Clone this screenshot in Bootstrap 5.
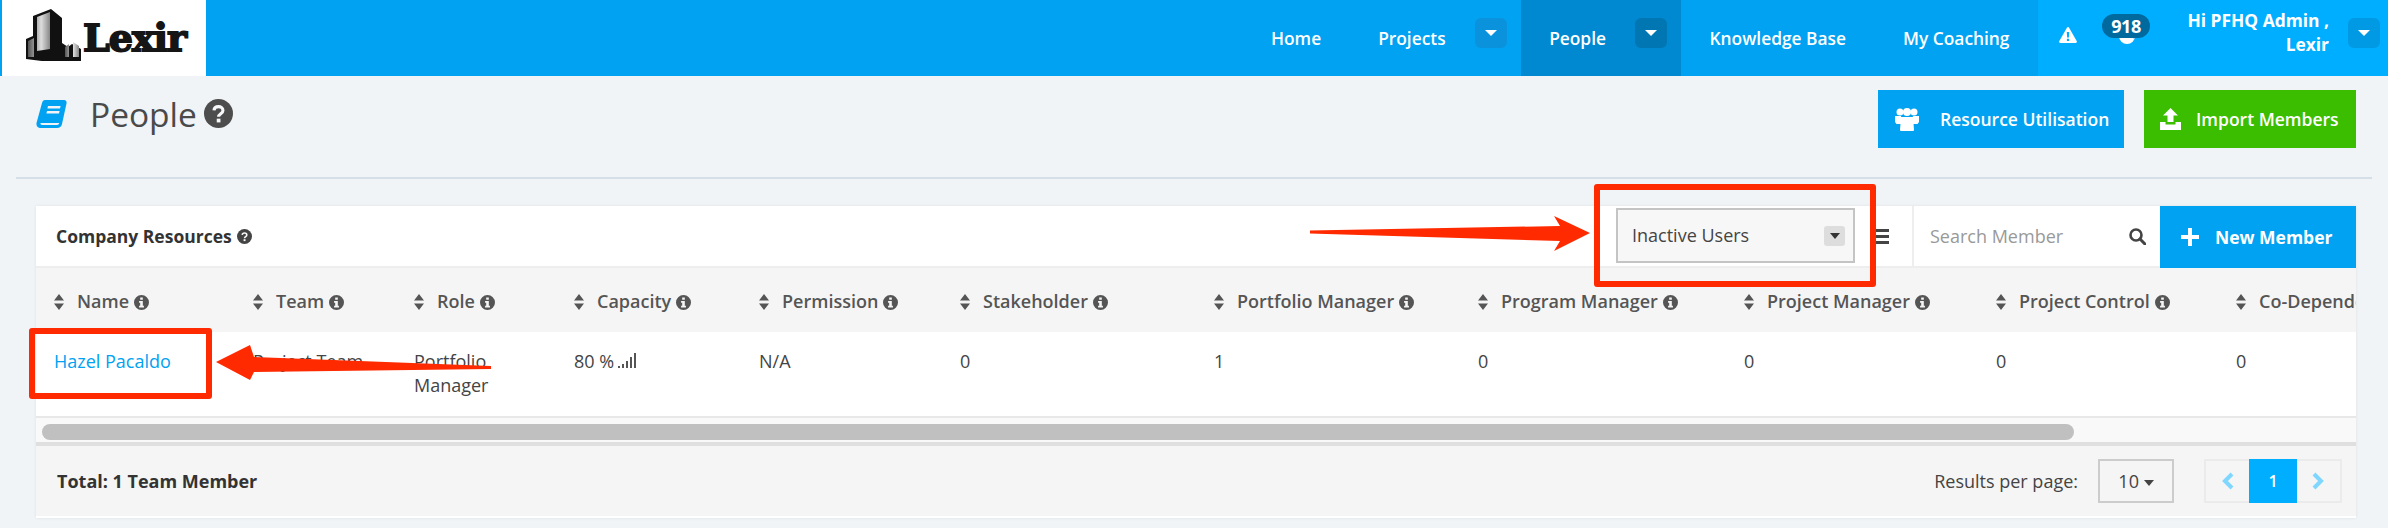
<!DOCTYPE html>
<html lang="en"><head><meta charset="utf-8"><title>People</title>
<link href="https://cdn.jsdelivr.net/npm/bootstrap@5.3.0/dist/css/bootstrap.min.css" rel="stylesheet">
<style>
body{background:#f0f4f7;font-family:"Open Sans",sans-serif;font-size:18px;color:#444;position:relative;width:2388px;height:528px;overflow:hidden}
.topbar{height:76px;background:#00a2f1;padding:0 0 0 2px;color:#fff;font-weight:600;font-size:17.35px}
.logo-box{width:204px;background:#fff;position:relative}
.logo-word{position:absolute;left:81px;top:19px;font:700 38px/1 "DejaVu Serif",serif;letter-spacing:-1px;color:#151515;-webkit-text-stroke:1.8px #151515}
.logo-art{position:absolute;left:24px;top:7px}
.cell{padding:0 28.5px;color:#fff;text-decoration:none;display:flex;align-items:center;height:76px;white-space:nowrap}
.cell.has-drop{padding-right:14px}
.cell.on{background:#0089d0}
.drop-btn{width:32px;height:30px;margin-left:29px;margin-top:-10px;border-radius:6px;background:#0a93dc;display:flex;align-items:center;justify-content:center}
.cell.on .drop-btn{background:#0077b3}
.tri{width:0;height:0;border:6px solid transparent;border-top:6px solid #fff;border-bottom:0}
.user-zone{width:350px;background:#00aeff;position:relative;height:76px}
.alert-ico{margin-left:21px;margin-top:27px}
.bell-wrap{position:relative;width:48px;margin-left:25px}
.bell-ico{position:absolute;left:17px;top:28px}
.count{position:absolute;left:0;top:14px;width:48px;height:24px;padding:0;line-height:24px;background:#006a9e;font-size:18px;font-weight:700;border-radius:12px;letter-spacing:-.5px}
.hello{width:142px;margin-left:37px;margin-top:8px;text-align:right;line-height:24px;font-weight:700;font-size:17.4px;white-space:nowrap}
.user-zone .drop-btn{margin-left:19px;margin-top:18px;background:#0099e4}
.title-zone{height:101px;padding:0 32px 0 36px}
.book{margin-top:24px}
.page-name{font-size:33.5px;font-weight:400;margin:15px 0 0 23px;line-height:46px;color:#4a4a4a}
.help-big{margin:23px 0 0 7px}
.act{height:58px;margin-top:14px;border:0;border-radius:0;color:#fff;font-weight:600;font-size:17.5px;display:flex;align-items:center;white-space:nowrap}
.act-a{width:246px;background:#00a2f1;padding:0 0 0 17px;gap:21px}
.act-b{width:212px;background:#3bbd00;padding:0 0 0 16px;gap:15px;margin-left:20px}
.rule{margin:0 16px;height:2px;background:#d5dfe8;opacity:1;border:0}
.sheet{margin:27px 32px 0 36px;border:0;border-radius:0;box-shadow:0 0 3px rgba(0,0,0,.08);overflow:hidden;background:#fff;height:312px}
.sheet-head{height:62px;background:#fff;border:0;border-bottom:2px solid #eee;padding:0;border-radius:0!important}
.sheet-title{margin-left:20px;font-weight:700;font-size:17.5px;color:#333;gap:5px}
.fake-select{width:239px;height:55px;margin:2px 0 0 auto;border:2px solid #c4c4c4;background:#f7f7f7;padding:0 8px 0 14px;color:#444;font-size:18px}
.caret-box{width:21px;height:20px;background:#ddd;border-radius:3px}
.caret-box .tri{border-width:5px;border-top:6px solid #333;border-bottom:0;margin:7px auto 0}
.burger{margin-left:21px;margin-right:23px}
.search-zone{width:248px;border-left:2px solid #eee;padding:0 14px 0 16px}
.search-text{border:0;padding:0;background:transparent;box-shadow:none;font-size:18px;color:#999;width:190px;height:40px}
.search-text::placeholder{color:#999;opacity:1}
.new-btn{width:196px;height:62px;background:#00a2f1;color:#fff;border:0;border-radius:0;font-weight:700;font-size:17.5px;padding:0 0 0 21px;gap:16px;margin-bottom:-2px;white-space:nowrap}
.tbl-clip{overflow:hidden;height:148px}
.grid-tbl{table-layout:fixed;width:2682px;margin:0;color:#444;font-size:18px}
.grid-tbl col:nth-child(1){width:199px}.grid-tbl col:nth-child(2){width:161px}.grid-tbl col:nth-child(3){width:160px}.grid-tbl col:nth-child(4){width:185px}.grid-tbl col:nth-child(5){width:201px}.grid-tbl col:nth-child(6){width:254px}.grid-tbl col:nth-child(7){width:264px}.grid-tbl col:nth-child(8){width:266px}.grid-tbl col:nth-child(9){width:252px}.grid-tbl col:nth-child(10){width:240px}
.grid-tbl th{height:64px;background:#f5f5f5;font-weight:600;color:#555;border:0;padding:2px 0 0 18px;vertical-align:middle;white-space:nowrap;box-shadow:none;font-size:18px}
.grid-tbl td{height:84px;padding:17px 10px 0 18px;line-height:24px;vertical-align:top;border:0;color:#444;background:#fff;box-shadow:none}
.grid-tbl a{color:#00a2f1;text-decoration:none}
.sort{margin-right:13px;vertical-align:-2px}
.info{margin-left:5px;vertical-align:-2px}
.bars{margin-left:4px;vertical-align:-1px}
.scroll-track{height:30px;padding:6px 6px 0;background:#f9f9f9;border-top:2px solid #e8e8e8;border-bottom:4px solid #dfdfdf;box-sizing:border-box}
.scroll-thumb{width:2032px;height:16px;background:#c0c0c0;border-radius:8px}
.sheet-foot{height:70px;background:#f5f5f5;border:0;padding:0 14px 0 21px;border-radius:0!important}
.total{font-weight:700;font-size:18px;color:#333}
.per-label{margin:0 20px 0 0;color:#444;font-size:18px}
.per-btn{width:76px;height:44px;padding:0;border:2px solid #ccc;border-radius:0;background:#f5f5f5;color:#444;font-size:18px;--bs-btn-hover-bg:#f5f5f5}
.pager{margin:0 0 0 30px;height:44px;border:2px solid #ebebeb}
.pager .page-link{height:40px;border:0;border-radius:0!important;background:#f5f5f5;color:#7fd6ff;display:flex;align-items:center;justify-content:center;padding:0;width:44px}
.pager .page-item.active .page-link{background:#00aeff;color:#fff;width:48px;height:44px;margin-top:-2px;font-weight:600}
.marks{position:absolute;left:0;top:0;pointer-events:none}
</style></head>
<body>
<svg width="0" height="0" class="position-absolute">
<symbol id="sort" viewBox="0 0 10 16"><path d="M5 0l5 6.500H0zM5 16L0 9.500h10z" fill="#555"/></symbol>
<symbol id="info" viewBox="0 0 16 16"><path fill="#555" fill-rule="evenodd" d="M8 0a8 8 0 1 1 0 16A8 8 0 0 1 8 0zM6.600 2.600v2.500h2.800V2.600zM5.400 6.500v1.700h1.200v3.200H5.400v1.800h5.200v-1.800H9.400V6.500z"/></symbol>
<symbol id="help" viewBox="0 0 28 28"><circle cx="14" cy="14" r="14" fill="currentColor"/><path d="M9.600 11c.3-2.400 2.200-3.600 4.400-3.600 2.400 0 4.300 1.400 4.300 3.600 0 3.300-4.200 3-4.200 6.200" fill="none" stroke="#f6f8fa" stroke-width="3"/><rect x="12.300" y="19" width="3.600" height="3.600" fill="#f6f8fa"/></symbol>
</svg>

<nav class="topbar d-flex">
  <div class="logo-box">
    <svg class="logo-art" width="58" height="54" viewBox="0 0 58 54"><defs><linearGradient id="g1" x1="0" x2="1"><stop offset="0" stop-color="#555"/><stop offset=".6" stop-color="#ddd"/><stop offset="1" stop-color="#888"/></linearGradient></defs>
      <path d="M0 52V32l7-3V9l18-7 11 9v25l6 4 4-3 9 5v17z" fill="#111"/>
      <path d="M2 50V34l6-3v19zM11 44V10l13-5v37z" fill="url(#g1)"/><path d="M39 50V40l4-3v13zM47 50V35l6 4v11z" fill="url(#g1)"/></svg>
    <span class="logo-word">Lexir</span>
  </div>
  <div class="d-flex ms-auto">
    <a class="cell" href="#">Home</a>
    <a class="cell has-drop" href="#">Projects<span class="drop-btn"><i class="tri"></i></span></a>
    <a class="cell has-drop on" href="#">People<span class="drop-btn"><i class="tri"></i></span></a>
    <a class="cell" href="#">Knowledge Base</a>
    <a class="cell" href="#">My Coaching</a>
    <div class="user-zone d-flex">
      <svg class="alert-ico" width="18" height="16" viewBox="0 0 18 16"><path fill="#fff" fill-rule="evenodd" d="M9 0c.5 0 .9.300 1.100.700l7.700 13.500c.4.800-.1 1.800-1.100 1.800H1.300C.3 16-.2 15 .2 14.200L7.900.700C8.100.300 8.500 0 9 0zM7.800 5l.3 5.500h1.800L10.200 5zM7.900 11.700v2.200h2.200v-2.200z"/></svg>
      <div class="bell-wrap">
        <svg class="bell-ico" width="16" height="16" viewBox="0 0 16 16"><circle cx="8" cy="8" r="8" fill="#fff"/><path d="M8 0a8 8 0 0 1 8 8c0 1-.3 2-.6 3L9 7z" fill="#9cb4c0"/></svg>
        <span class="badge count">918</span>
      </div>
      <div class="hello">Hi PFHQ Admin ,<br>Lexir</div>
      <span class="drop-btn"><i class="tri"></i></span>
    </div>
  </div>
</nav>

<header class="title-zone d-flex align-items-start">
  <svg class="book" width="31" height="29" viewBox="0 0 31 29"><path fill="#00a2f1" fill-rule="evenodd" d="M9 0h19c2 0 3 1.500 2.500 3.500L26 24c-.5 2.500-2.500 4-5 4H5c-3 0-5-2-4.500-5L6 3c.5-2 1.500-3 3-3zM12 6l-.6 2.500H24L24.600 6zM11 11l-.6 2.500h12.600L23.600 11zM4.500 23c-.3 1.200.5 2 1.700 2H21c1.300 0 2-1 2.300-2z"/></svg>
  <h1 class="page-name">People</h1>
  <svg class="help-big" width="29" height="29" style="color:#4d4d4d"><use href="#help"/></svg>
  <button class="btn act act-a ms-auto" type="button">
    <svg width="24" height="24" viewBox="0 0 24 24"><g fill="#fff"><circle cx="5" cy="5" r="3.500"/><circle cx="19" cy="5" r="3.500"/><circle cx="12" cy="5" r="4"/><path d="M0 9h6l1 6v2H1.500L0 15zM24 9h-6l-1 6v2h5.500l1.500-2z"/><path d="M6 10h12l1 13c0 1-1 1-2 1H7c-1 0-2 0-2-1z"/></g></svg>
    Resource Utilisation</button>
  <button class="btn act act-b" type="button">
    <svg width="21" height="22" viewBox="0 0 21 22"><path fill="#fff" d="M10.500 0L18 7.500h-4.500V14h-6V7.500H3zM0 14h5.500v2.500h10V14H21v8H0z"/></svg>
    Import Members</button>
</header>
<hr class="rule">

<section class="card sheet">
  <div class="card-header sheet-head d-flex align-items-stretch">
    <div class="sheet-title d-flex align-items-center">Company Resources <svg width="15" height="15" style="color:#444"><use href="#help"/></svg></div>
    <div class="fake-select d-flex align-items-center justify-content-between"><span>Inactive Users</span><span class="caret-box"><i class="tri d-block"></i></span></div>
    <svg class="burger align-self-center" width="13" height="15" viewBox="0 0 13 15"><path fill="#444" d="M0 0h13v3H0zM0 6h13v3H0zM0 12h13v3H0z"/></svg>
    <div class="search-zone d-flex align-items-center justify-content-between">
      <input class="form-control search-text" placeholder="Search Member" aria-label="Search Member">
      <svg width="17" height="17" viewBox="0 0 17 17"><circle cx="7" cy="7" r="5.500" fill="none" stroke="#444" stroke-width="2.600"/><path d="M11 11l5 5" stroke="#444" stroke-width="3" stroke-linecap="round"/></svg>
    </div>
    <button class="btn new-btn d-flex align-items-center" type="button"><svg width="18" height="18" viewBox="0 0 18 18"><path fill="#fff" d="M7 0h4v7h7v4h-7v7H7v-7H0V7h7z"/></svg>New Member</button>
  </div>
  <div class="tbl-clip">
    <table class="table grid-tbl">
      <colgroup><col><col><col><col><col><col><col><col><col><col><col></colgroup>
      <thead><tr>
        <th><svg class="sort" width="10" height="16"><use href="#sort"/></svg>Name<svg class="info" width="15" height="15"><use href="#info"/></svg></th>
        <th><svg class="sort" width="10" height="16"><use href="#sort"/></svg>Team<svg class="info" width="15" height="15"><use href="#info"/></svg></th>
        <th><svg class="sort" width="10" height="16"><use href="#sort"/></svg>Role<svg class="info" width="15" height="15"><use href="#info"/></svg></th>
        <th><svg class="sort" width="10" height="16"><use href="#sort"/></svg>Capacity<svg class="info" width="15" height="15"><use href="#info"/></svg></th>
        <th><svg class="sort" width="10" height="16"><use href="#sort"/></svg>Permission<svg class="info" width="15" height="15"><use href="#info"/></svg></th>
        <th><svg class="sort" width="10" height="16"><use href="#sort"/></svg>Stakeholder<svg class="info" width="15" height="15"><use href="#info"/></svg></th>
        <th><svg class="sort" width="10" height="16"><use href="#sort"/></svg>Portfolio Manager<svg class="info" width="15" height="15"><use href="#info"/></svg></th>
        <th><svg class="sort" width="10" height="16"><use href="#sort"/></svg>Program Manager<svg class="info" width="15" height="15"><use href="#info"/></svg></th>
        <th><svg class="sort" width="10" height="16"><use href="#sort"/></svg>Project Manager<svg class="info" width="15" height="15"><use href="#info"/></svg></th>
        <th><svg class="sort" width="10" height="16"><use href="#sort"/></svg>Project Control<svg class="info" width="15" height="15"><use href="#info"/></svg></th>
        <th><svg class="sort" width="10" height="16"><use href="#sort"/></svg>Co-Dependency<svg class="info" width="15" height="15"><use href="#info"/></svg></th>
      </tr></thead>
      <tbody><tr>
        <td><a href="#">Hazel Pacaldo</a></td><td>Project Team</td><td>Portfolio Manager</td>
        <td>80 %<svg class="bars" width="18" height="16" viewBox="0 0 18 16"><path fill="#555" d="M0 13h2v2H0zM4 11h2v4H4zM8 8h2v7H8zM12 4h2v11h-2zM16 0h2v15h-2z"/></svg></td>
        <td>N/A</td><td>0</td><td>1</td><td>0</td><td>0</td><td>0</td><td>0</td>
      </tr></tbody>
    </table>
  </div>
  <div class="scroll-track"><div class="scroll-thumb"></div></div>
  <div class="card-footer sheet-foot d-flex align-items-center">
    <span class="total">Total: 1 Team Member</span>
    <p class="per-label ms-auto">Results per page:</p>
    <button class="btn per-btn" type="button">10 <svg width="10" height="6" viewBox="0 0 10 6" class="ms-0"><path fill="#444" d="M0 0h10L5 6z"/></svg></button>
    <ul class="pagination pager">
      <li class="page-item"><a class="page-link" href="#" aria-label="Previous"><svg width="12" height="18" viewBox="0 0 12 18"><path d="M10 2L3 9l7 7" fill="none" stroke="#7fd6ff" stroke-width="4"/></svg></a></li>
      <li class="page-item active"><a class="page-link" href="#">1</a></li>
      <li class="page-item"><a class="page-link" href="#" aria-label="Next"><svg width="12" height="18" viewBox="0 0 12 18"><path d="M2 2l7 7-7 7" fill="none" stroke="#7fd6ff" stroke-width="4"/></svg></a></li>
    </ul>
  </div>
</section>

<svg class="marks" width="2388" height="528" viewBox="0 0 2388 528">
  <g fill="none" stroke="#ff2a00" stroke-width="6" stroke-linejoin="round">
    <rect x="1597" y="187" width="276" height="97"/>
    <rect x="32" y="331" width="177" height="65"/>
  </g>
  <g fill="#ff2a00">
    <path d="M1310 230.500L1560 226 1554 216 1590 233 1554 251 1560 241 1310 233.500z"/>
    <path d="M491 366L254 357 250 345 216 362 250 380 254 372 491 369z"/>
  </g>
</svg>
</body></html>
